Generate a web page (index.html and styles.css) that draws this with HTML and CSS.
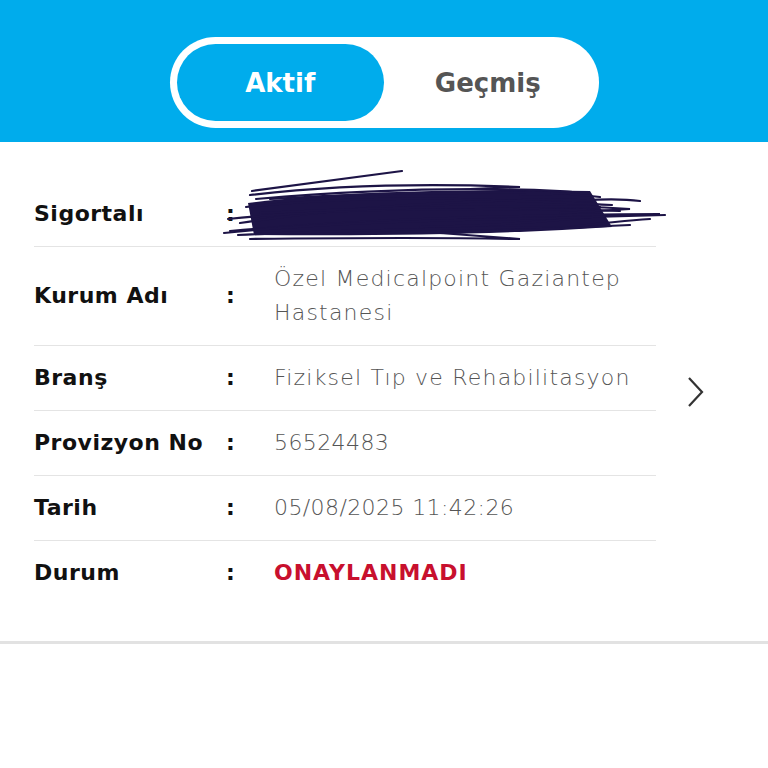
FILE: index.html
```html
<!DOCTYPE html>
<html lang="tr">
<head>
<meta charset="UTF-8">
<meta name="viewport" content="width=device-width, initial-scale=1.0">
<title>Provizyonlar</title>
<link rel="stylesheet" href="styles.css">
</head>
<body>
    <div class="header">
        <div class="toggle">
            <div class="tab active">Aktif</div>
            <div class="tab">Geçmiş</div>
        </div>
    </div>

    <div class="card">
        <div class="list">
            <div class="row">
                <div class="label">Sigortalı</div>
                <div class="colon">:</div>
                <div class="value">&nbsp;</div>
                <!-- karalama (isim gizli) -->
                <svg class="scribble" width="450" height="75" viewBox="0 0 450 75">
                    <path d="M28 34 Q150 18 370 22 L392 58 Q250 68 34 66 Z" fill="#1d1446"/>
                    <g fill="none" stroke="#1d1446" stroke-width="2.2" stroke-linecap="round">
                        <path d="M32 22 L182 2"/>
                        <path d="M30 26 Q150 12 300 18 L250 20 Q330 22 380 28"/>
                        <path d="M36 30 Q200 16 340 22 Q380 24 300 26"/>
                        <path d="M20 54 Q160 32 360 30 L330 34 Q390 28 420 32"/>
                        <path d="M10 62 Q200 46 440 45 L380 47 Q300 56 200 58"/>
                        <path d="M4 64 Q120 52 300 50 Q380 48 445 46"/>
                        <path d="M18 66 Q150 60 350 58 Q400 52 430 50"/>
                        <path d="M30 70 Q200 68 300 70 L220 64 Q330 60 410 56"/>
                        <path d="M8 50 Q100 40 260 40 Q350 40 400 42"/>
                        <path d="M26 38 Q120 28 240 30 Q340 33 392 36"/>
                        <path d="M50 30 Q180 22 330 24"/>
                        <path d="M300 40 Q360 36 410 40 L340 44"/>
                        <path d="M40 44 Q200 36 380 38"/>
                    </g>
                </svg>
            </div>
            <div class="row">
                <div class="label">Kurum Adı</div>
                <div class="colon">:</div>
                <div class="value">Özel Medicalpoint Gaziantep Hastanesi</div>
            </div>
            <div class="row">
                <div class="label">Branş</div>
                <div class="colon">:</div>
                <div class="value">Fiziksel Tıp ve Rehabilitasyon</div>
            </div>
            <div class="row">
                <div class="label">Provizyon No</div>
                <div class="colon">:</div>
                <div class="value num">56524483</div>
            </div>
            <div class="row">
                <div class="label">Tarih</div>
                <div class="colon">:</div>
                <div class="value num">05/08/2025 11:42:26</div>
            </div>
            <div class="row">
                <div class="label">Durum</div>
                <div class="colon">:</div>
                <div class="value status">ONAYLANMADI</div>
            </div>
        </div>
        <div class="arrow">
            <svg width="18" height="30" viewBox="0 0 18 30">
                <path d="M2 1 L15 15 L2 29" fill="none" stroke="#333" stroke-width="2.2"/>
            </svg>
        </div>
    </div>
</body>
</html>
```

FILE: styles.css
```css
body{
    margin: 0;
    font-family: "DejaVu Sans", "Noto Sans", sans-serif;
    background: #fff;
}

.header{
    background: #00acec;
    padding: 37px 0 14px;
    display: flex;
    justify-content: center;
}
.toggle{
    width: 429px;
    height: 91px;
    box-sizing: border-box;
    padding: 7px;
    background: #fff;
    border-radius: 46px;
    display: grid;
    grid-template-columns: 1fr 1fr;
}
.tab{
    display: flex;
    align-items: center;
    justify-content: center;
    font-size: 26px;
    font-weight: 700;
    color: #555;
    border-radius: 39px;
}
.tab.active{
    background: #00acec;
    color: #fff;
}

.card{
    display: flex;
    padding: 40px 0 36px;
    border-bottom: 3px solid #e2e2e2;
}
.list{
    width: 622px;
    margin-left: 34px;
}
.row{
    position: relative;
    display: grid;
    grid-template-columns: 192px 48px 1fr;
    align-items: center;
    padding: 15px 0;
    line-height: 34px;
    border-bottom: 1px solid #e4e4e4;
    font-size: 22px;
}
.row:last-child{
    border-bottom: none;
}
.label{
    font-weight: 700;
    color: #111;
    letter-spacing: 0.5px;
}
.colon{
    font-weight: 700;
    color: #111;
}
.value{
    font-weight: 300;
    color: #555;
    letter-spacing: 1.2px;
}
.value.num{
    letter-spacing: 0.4px;
}
.value.status{
    font-weight: 700;
    color: #c8102e;
    letter-spacing: 1px;
}
.scribble{
    position: absolute;
    left: 186px;
    top: -13px;
}
.arrow{
    display: flex;
    align-items: center;
    margin-left: 31px;
}
.arrow svg{
    display: block;
    margin-bottom: 4px;
}
```
